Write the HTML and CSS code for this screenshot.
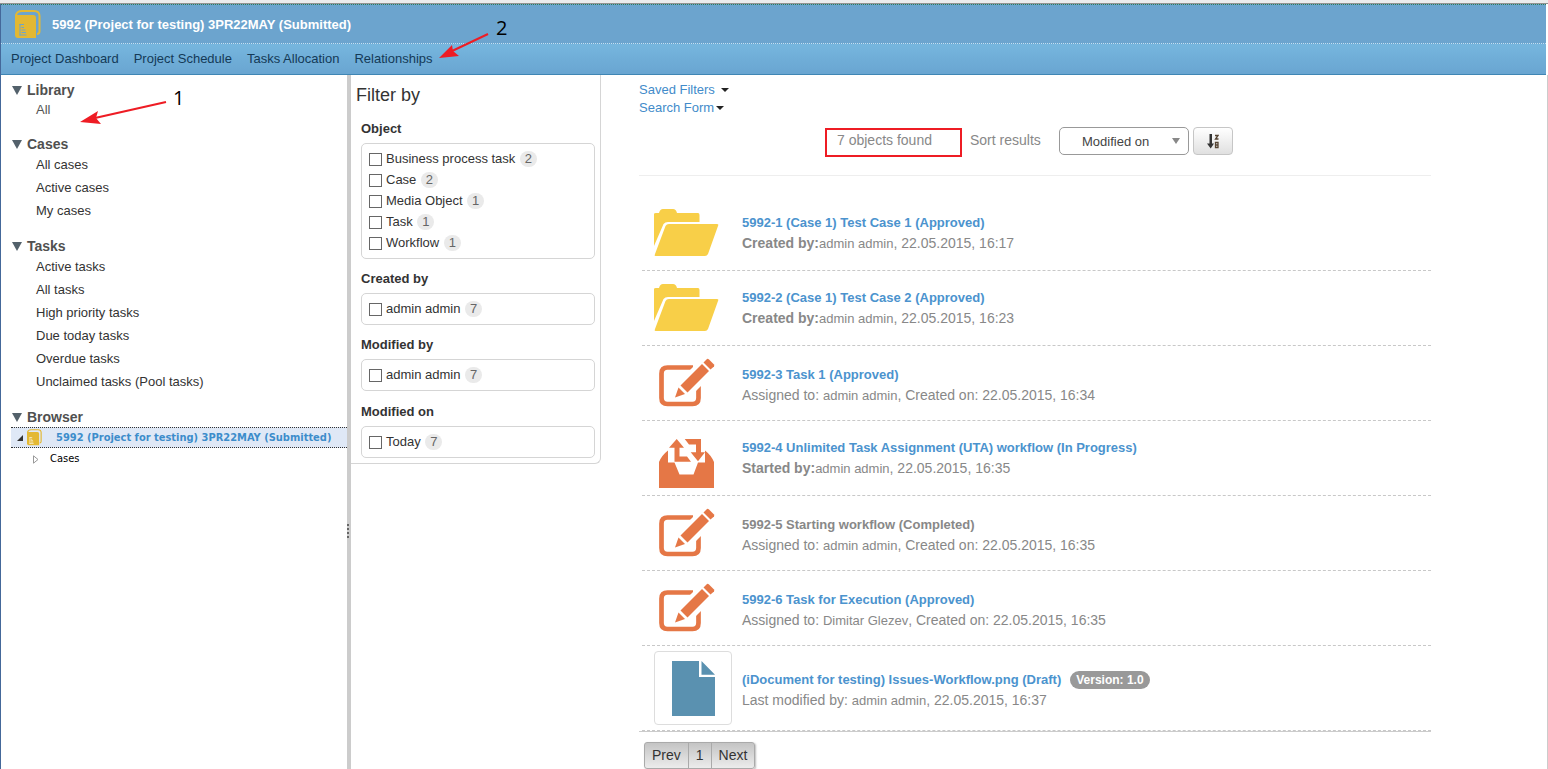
FILE: index.html
```html
<!DOCTYPE html>
<html lang="en">
<head>
<meta charset="utf-8">
<title>5992 (Project for testing) 3PR22MAY (Submitted)</title>
<link rel="stylesheet" href="styles.css">
</head>
<body>
<svg class="defs" aria-hidden="true">
  <symbol id="book" viewBox="0 0 26 29">
    <path d="M1 6V5Q2 1 7 1H19Q24.500 1 24.500 6V21Q24.500 24 22 24" fill="none" stroke="#e3b833" stroke-width="2"/>
    <path d="M0 5H18Q21 5 21 8V28H3Q0 28 0 25V5Z" fill="#e3b833"/>
    <path d="M5 14V25.500M4.500 14.500H9M6.500 17.500H9M6.500 20H10.500M6.500 22.500H11M4.500 25H11.500" fill="none" stroke="currentColor"/>
  </symbol>
  <symbol id="folder" viewBox="0 0 78 74">
    <g fill="#f8cf48">
      <path d="M0 18Q0 17 2 17H5Q6 13 9 13H19Q22 13 23 17H44Q45.500 17 45.500 19V26H14Q11 26 9.500 28L0 50Z"/>
      <path d="M15 28H63Q65 28 64 30L54 58Q53 60 51 60H1.500Q0 60 1 58L11.500 30Q12.500 28 15 28Z"/>
    </g>
  </symbol>
  <symbol id="task" viewBox="0 0 78 74">
    <path d="M39 21.500H13.500Q7.500 21.500 7.500 27.500V52Q7.500 58 13.500 58H38.500Q44.500 58 44.500 52V40" fill="none" stroke="#e57746" stroke-width="4.700"/>
    <path d="M35 25L43 17H49V38L42 45Z" fill="#fff"/>
    <g fill="#e57746">
      <path d="M21 51.500L24.500 41.500L31 48Z"/>
      <path d="M26.500 39.500L48 18L55 25L33.500 46.500Z"/>
      <path d="M49.500 16.500L53 13Q54 12.500 55 13.500L60 18.500Q60.500 19.500 60 20.500L56.500 23.500Z"/>
    </g>
  </symbol>
  <symbol id="workflow" viewBox="0 0 78 74">
    <g fill="#e57746">
      <path d="M5 41Q8 34 14 29.500V41.500H20.500L25.500 53.500H39.500L44 41.500H51V29.500Q57 34 60 41V67H5Z"/>
      <path d="M22.700 18L30 26.700H25.500V35.500H33L37 40.700H20.500V26.700H15Z"/>
      <path d="M30.700 18H47V31.300H51L44 40.300L36.700 31.300H42V23.500H35Z"/>
    </g>
  </symbol>
</svg>

<div class="topstrip"></div>
<div class="page">
  <header class="header">
    <div class="header-title">
      <svg class="book" aria-hidden="true"><use href="#book"/></svg>
      <h1>5992 (Project for testing) 3PR22MAY (Submitted)</h1>
    </div>
    <nav class="nav">
      <a href="#">Project Dashboard</a>
      <a href="#">Project Schedule</a>
      <a href="#">Tasks Allocation</a>
      <a href="#">Relationships</a>
    </nav>
  </header>

  <main class="main">
    <aside class="sidebar">
      <section class="group library">
        <h2>Library</h2>
        <ul><li><a href="#">All</a></li></ul>
      </section>
      <section class="group">
        <h2>Cases</h2>
        <ul>
          <li><a href="#">All cases</a></li>
          <li><a href="#">Active cases</a></li>
          <li><a href="#">My cases</a></li>
        </ul>
      </section>
      <section class="group">
        <h2>Tasks</h2>
        <ul>
          <li><a href="#">Active tasks</a></li>
          <li><a href="#">All tasks</a></li>
          <li><a href="#">High priority tasks</a></li>
          <li><a href="#">Due today tasks</a></li>
          <li><a href="#">Overdue tasks</a></li>
          <li><a href="#">Unclaimed tasks (Pool tasks)</a></li>
        </ul>
      </section>
      <section class="group">
        <h2>Browser</h2>
        <div class="tree">
          <div class="tree-root">
            <svg class="twisty" viewBox="0 0 6 6" aria-hidden="true"><path d="M6 0V6H0Z" fill="#333"/></svg>
            <svg class="book-small" aria-hidden="true"><use href="#book"/></svg>
            <a href="#">5992 (Project for testing) 3PR22MAY (Submitted)</a>
          </div>
          <div class="tree-child">
            <svg class="expander" viewBox="0 0 6 9" aria-hidden="true"><path d="M.5 .8L5 4.500L.5 8.200Z" fill="#fff" stroke="#999"/></svg>
            <a href="#">Cases</a>
          </div>
        </div>
      </section>
    </aside>
    <div class="splitter"><span class="grip"></span></div>

    <form class="filters">
      <h2>Filter by</h2>
      <fieldset>
        <legend>Object</legend>
        <div class="options">
          <label><input type="checkbox">Business process task <span class="count">2</span></label>
          <label><input type="checkbox">Case <span class="count">2</span></label>
          <label><input type="checkbox">Media Object <span class="count">1</span></label>
          <label><input type="checkbox">Task <span class="count">1</span></label>
          <label><input type="checkbox">Workflow <span class="count">1</span></label>
        </div>
      </fieldset>
      <fieldset>
        <legend>Created by</legend>
        <div class="options"><label><input type="checkbox">admin admin <span class="count">7</span></label></div>
      </fieldset>
      <fieldset>
        <legend>Modified by</legend>
        <div class="options"><label><input type="checkbox">admin admin <span class="count">7</span></label></div>
      </fieldset>
      <fieldset>
        <legend>Modified on</legend>
        <div class="options"><label><input type="checkbox">Today <span class="count">7</span></label></div>
      </fieldset>
    </form>

    <section class="content">
      <div class="menus">
        <button type="button" class="menu saved">Saved Filters</button>
        <button type="button" class="menu">Search Form</button>
      </div>
      <div class="toolbar">
        <span class="found">7 objects found</span>
        <label class="sort-label" for="sort">Sort results</label>
        <span class="select"><select id="sort"><option>Modified on</option></select></span>
        <button type="button" class="sort-dir" aria-label="Sort descending">
          <svg viewBox="0 0 12 15" aria-hidden="true">
            <path d="M2.500 0H5V9.500H7L3.700 14.500L0 9.500H2.500Z" fill="#333"/>
            <path d="M8 1.500H11L8.500 5H11.500M8.500 13.500V8.500H11V13.500ZM8.500 11H11" fill="none" stroke="#543" stroke-width="1.300"/>
          </svg>
        </button>
      </div>
      <ul class="results">
        <li class="item">
          <svg class="icon" aria-hidden="true"><use href="#folder"/></svg>
          <div><a href="#" class="title">5992-1 (Case 1) Test Case 1 (Approved)</a>
          <p><b>Created by:</b><a href="#">admin admin</a>, 22.05.2015, 16:17</p></div>
        </li>
        <li class="item">
          <svg class="icon" aria-hidden="true"><use href="#folder"/></svg>
          <div><a href="#" class="title">5992-2 (Case 1) Test Case 2 (Approved)</a>
          <p><b>Created by:</b><a href="#">admin admin</a>, 22.05.2015, 16:23</p></div>
        </li>
        <li class="item low">
          <svg class="icon" aria-hidden="true"><use href="#task"/></svg>
          <div><a href="#" class="title">5992-3 Task 1 (Approved)</a>
          <p>Assigned to: <a href="#">admin admin</a>, Created on: 22.05.2015, 16:34</p></div>
        </li>
        <li class="item">
          <svg class="icon" aria-hidden="true"><use href="#workflow"/></svg>
          <div><a href="#" class="title">5992-4 Unlimited Task Assignment (UTA) workflow (In Progress)</a>
          <p><b>Started by:</b><a href="#">admin admin</a>, 22.05.2015, 16:35</p></div>
        </li>
        <li class="item low">
          <svg class="icon" aria-hidden="true"><use href="#task"/></svg>
          <div><a href="#" class="title done">5992-5 Starting workflow (Completed)</a>
          <p>Assigned to: <a href="#">admin admin</a>, Created on: 22.05.2015, 16:35</p></div>
        </li>
        <li class="item low">
          <svg class="icon" aria-hidden="true"><use href="#task"/></svg>
          <div><a href="#" class="title">5992-6 Task for Execution (Approved)</a>
          <p>Assigned to: <a href="#">Dimitar Glezev</a>, Created on: 22.05.2015, 16:35</p></div>
        </li>
        <li class="item low document">
          <span class="thumb">
            <svg viewBox="0 0 43 55" aria-hidden="true"><path d="M0 0H27V16H43V55H0ZM29.500 0L43 13.700H29.500Z" fill="#5a91b0"/></svg>
          </span>
          <div><a href="#" class="title">(iDocument for testing) Issues-Workflow.png (Draft)</a><span class="version">Version: 1.0</span>
          <p>Last modified by: <a href="#">admin admin</a>, 22.05.2015, 16:37</p></div>
        </li>
      </ul>
      <div class="pager">
        <div class="pages">
          <button type="button">Prev</button><button type="button">1</button><button type="button">Next</button>
        </div>
      </div>
    </section>
  </main>
</div>

<div class="note note-one">
  <svg viewBox="0 0 90 26" aria-hidden="true"><path d="M86 2L15 18" stroke="#ee1c24" stroke-width="2"/><path d="M0 22L18 11L16 18L21 24Z" fill="#ee1c24"/></svg>
  <span>1</span>
</div>
<div class="note note-two">
  <svg viewBox="0 0 52 26" aria-hidden="true"><path d="M50 1L12 19" stroke="#ee1c24" stroke-width="2"/><path d="M1 25L14 12L15 18L21 23Z" fill="#ee1c24"/></svg>
  <span>2</span>
</div>
</body>
</html>
```

FILE: styles.css
```css
* { box-sizing: border-box; }

body {
  margin: 0;
  min-height: 100vh;
  display: flex;
  flex-direction: column;
  background: #fff;
  color: #333;
  font: 13px/18px "Liberation Sans", Arial, sans-serif;
  position: relative;
}

h1, h2, p, ul { margin: 0; padding: 0; }
ul { list-style: none; }
a { color: inherit; text-decoration: none; }
button, select { font: inherit; color: inherit; cursor: pointer; }
.defs { position: absolute; width: 0; height: 0; }

.topstrip {
  height: 4px;
  background: #ececec;
  border-bottom: 1px solid #929292;
}

.page {
  flex: 1;
  display: flex;
  flex-direction: column;
  border-left: 1px solid #44689a;
}

/* Header */
.header { margin-right: 2px; }

.header-title {
  height: 39px;
  display: flex;
  align-items: center;
  gap: 11px;
  padding: 1px 0 0 14px;
  background: #6ca4ce;
  border-top: 1px dotted #2f7d58;
}
.header-title h1 { font-size: 13px; line-height: 18px; color: #fff; }
.book { width: 26px; height: 29px; color: #6ca4ce; }

.nav {
  height: 32px;
  display: flex;
  align-items: center;
  gap: 15px;
  padding-left: 10px;
  background: linear-gradient(#76b6de, #69a5d1);
  border-top: 1px dotted #c4dff0;
  border-bottom: 1px solid #3f86b4;
  color: #143a57;
}

.main {
  flex: 1;
  display: flex;
  align-items: stretch;
  border-right: 1px solid #ccc;
}

/* Sidebar */
.sidebar {
  flex: 0 0 346px;
  padding: 6px 0 0 10px;
  display: flex;
  flex-direction: column;
  gap: 15px;
}
.group h2 {
  display: flex;
  align-items: center;
  gap: 5px;
  padding-left: 1px;
  font-size: 14px;
  line-height: 18px;
  color: #505050;
}
.group h2::before {
  content: "";
  border: 5px solid transparent;
  border-top: 9px solid #53616b;
  border-bottom: 0;
}
.group li { padding-left: 25px; line-height: 23px; }
.group.library li { line-height: 21px; color: #555; }

.tree {
  margin-top: 1px;
  font: 11px/22px "DejaVu Sans Condensed", "DejaVu Sans", sans-serif;
}
.tree-root {
  height: 21px;
  display: flex;
  align-items: center;
  padding-left: 6px;
  background: #dfe8f6;
  border-top: 1px dotted #333;
  border-bottom: 1px dotted #333;
  color: #3d8dcb;
  font-weight: bold;
  white-space: nowrap;
}
.twisty { width: 6px; height: 6px; }
.book-small { width: 15px; height: 17px; margin: 0 14px 0 4px; color: #fff; }
.tree-child {
  display: flex;
  align-items: center;
  gap: 11px;
  padding-left: 22px;
  color: #000;
}
.expander { width: 6px; height: 9px; }

.splitter {
  flex: 0 0 4px;
  display: flex;
  align-items: center;
  background: #ccc;
}
.grip {
  height: 14px;
  margin-top: 218px;
  border-left: 2px dotted #666;
}

/* Filters */
.filters {
  flex: 0 0 250px;
  align-self: flex-start;
  padding: 10px 5px 5px;
  border: 1px solid #d5d5d5;
  border-top: 0;
  border-left: 0;
  border-radius: 0 0 6px 0;
}
.filters h2 {
  font-size: 18px;
  font-weight: normal;
  line-height: 20px;
}
.filters fieldset {
  border: 0;
  margin: 10px 0 0;
  padding: 0 0 0 5px;
}
.filters h2 + fieldset { margin-top: 14px; }
.filters fieldset:last-of-type { margin-top: 11px; }
.filters legend {
  padding: 0;
  margin-bottom: 4px;
  font-weight: bold;
  line-height: 20px;
}
.options {
  padding: 4px 7px 5px;
  border: 1px solid #d5d5d5;
  border-radius: 5px;
}
.options label {
  display: flex;
  align-items: center;
  height: 21px;
  white-space: pre;
}
.options input {
  appearance: none;
  width: 13px;
  height: 13px;
  margin: 1px 4px 0 0;
  border: 1px solid #666;
  background: #fff;
}
.count {
  width: 17px;
  margin-left: 1px;
  line-height: 16px;
  border-radius: 8px;
  background: #eaeaea;
  color: #666;
  text-align: center;
}

/* Search results */
.content {
  flex: 1;
  min-width: 0;
  margin: 6px 116px 0 38px;
}
.menus {
  display: flex;
  flex-direction: column;
  align-items: flex-start;
}
.menu {
  display: flex;
  align-items: center;
  gap: 2px;
  padding: 0;
  border: 0;
  background: none;
  color: #428bca;
  line-height: 18px;
}
.menu.saved { gap: 6px; }
.menu::after {
  content: "";
  border: 4px solid transparent;
  border-top-color: #222;
  border-bottom: 0;
}

.toolbar {
  display: flex;
  justify-content: center;
  align-items: flex-start;
  margin-top: 10px;
  padding: 0 12px 18px 0;
  border-bottom: 1px solid #eee;
  color: #888;
  font-size: 14px;
}
.found {
  width: 137px;
  margin: 1px 8px 0 0;
  padding: 1px 10px 6px;
  border: 2px solid #ee1c24;
  line-height: 18px;
}
.sort-label { width: 89px; padding-top: 4px; }
.select {
  position: relative;
  width: 130px;
}
.select::after {
  content: "";
  position: absolute;
  right: 9px;
  top: 11px;
  border: 4px solid transparent;
  border-top: 6px solid #888;
  border-bottom: 0;
  pointer-events: none;
}
.select select {
  appearance: none;
  width: 100%;
  height: 28px;
  padding: 2px 22px 0;
  border: 1px solid #999;
  border-radius: 5px;
  background: #fff;
  color: #444;
  font-size: 13px;
}
.sort-dir {
  width: 40px;
  height: 28px;
  margin-left: 4px;
  padding: 0;
  border: 1px solid #c6c6c6;
  border-radius: 4px;
  background: linear-gradient(#fff, #e0e0e0);
}
.sort-dir svg { display: block; width: 12px; height: 15px; margin: 1px auto 0; }

.results {
  margin-top: 20px;
  padding-left: 3px;
  color: #888;
  font-size: 14px;
  line-height: 20px;
}
.item {
  min-height: 75px;
  display: flex;
  align-items: center;
  gap: 10px;
  padding-left: 12px;
  border-bottom: 1px dashed #c8c8c8;
}
.item.low > div { padding-top: 4px; }
.item.document { min-height: 85px; }
.item a { font-size: 13px; }
.item .title { font-weight: bold; color: #4b93ce; }
.item .title.done { color: #888; }
.icon { flex: none; width: 78px; height: 74px; }
.thumb {
  flex: none;
  width: 78px;
  height: 74px;
  display: flex;
  align-items: center;
  justify-content: center;
  border: 1px solid #ddd;
  border-radius: 4px;
}
.thumb svg { width: 43px; height: 55px; }
.version {
  display: inline-block;
  margin-left: 9px;
  padding: 0 6px;
  border-radius: 9px;
  background: #999;
  color: #fff;
  font-size: 12px;
  font-weight: bold;
  line-height: 18px;
}

.pager {
  padding: 10px 5px 0;
  border-top: 1px solid #ccc;
}
.pages {
  display: inline-flex;
  border: 1px solid #aaa;
  border-radius: 3px;
  background: linear-gradient(#c4c4c4, #ececec);
  box-shadow: 1px 1px 2px #bbb;
}
.pages button {
  height: 25px;
  padding: 0 7px 2px;
  border: 0;
  background: none;
  font-size: 14px;
}
.pages button + button { border-left: 1px solid #aaa; }

/* Callouts laid over the page */
.note {
  position: absolute;
  color: #000;
  font: 20px/24px "Open Sans", sans-serif;
}
.note svg { display: block; fill: none; }
.note span { position: absolute; }
.note-one { left: 80px; top: 100px; }
.note-one svg { width: 90px; height: 26px; }
.note-one span { left: 93px; top: -14px; }
.note-two { left: 438px; top: 33px; }
.note-two svg { width: 52px; height: 26px; }
.note-two span { left: 58px; top: -17px; }
```
